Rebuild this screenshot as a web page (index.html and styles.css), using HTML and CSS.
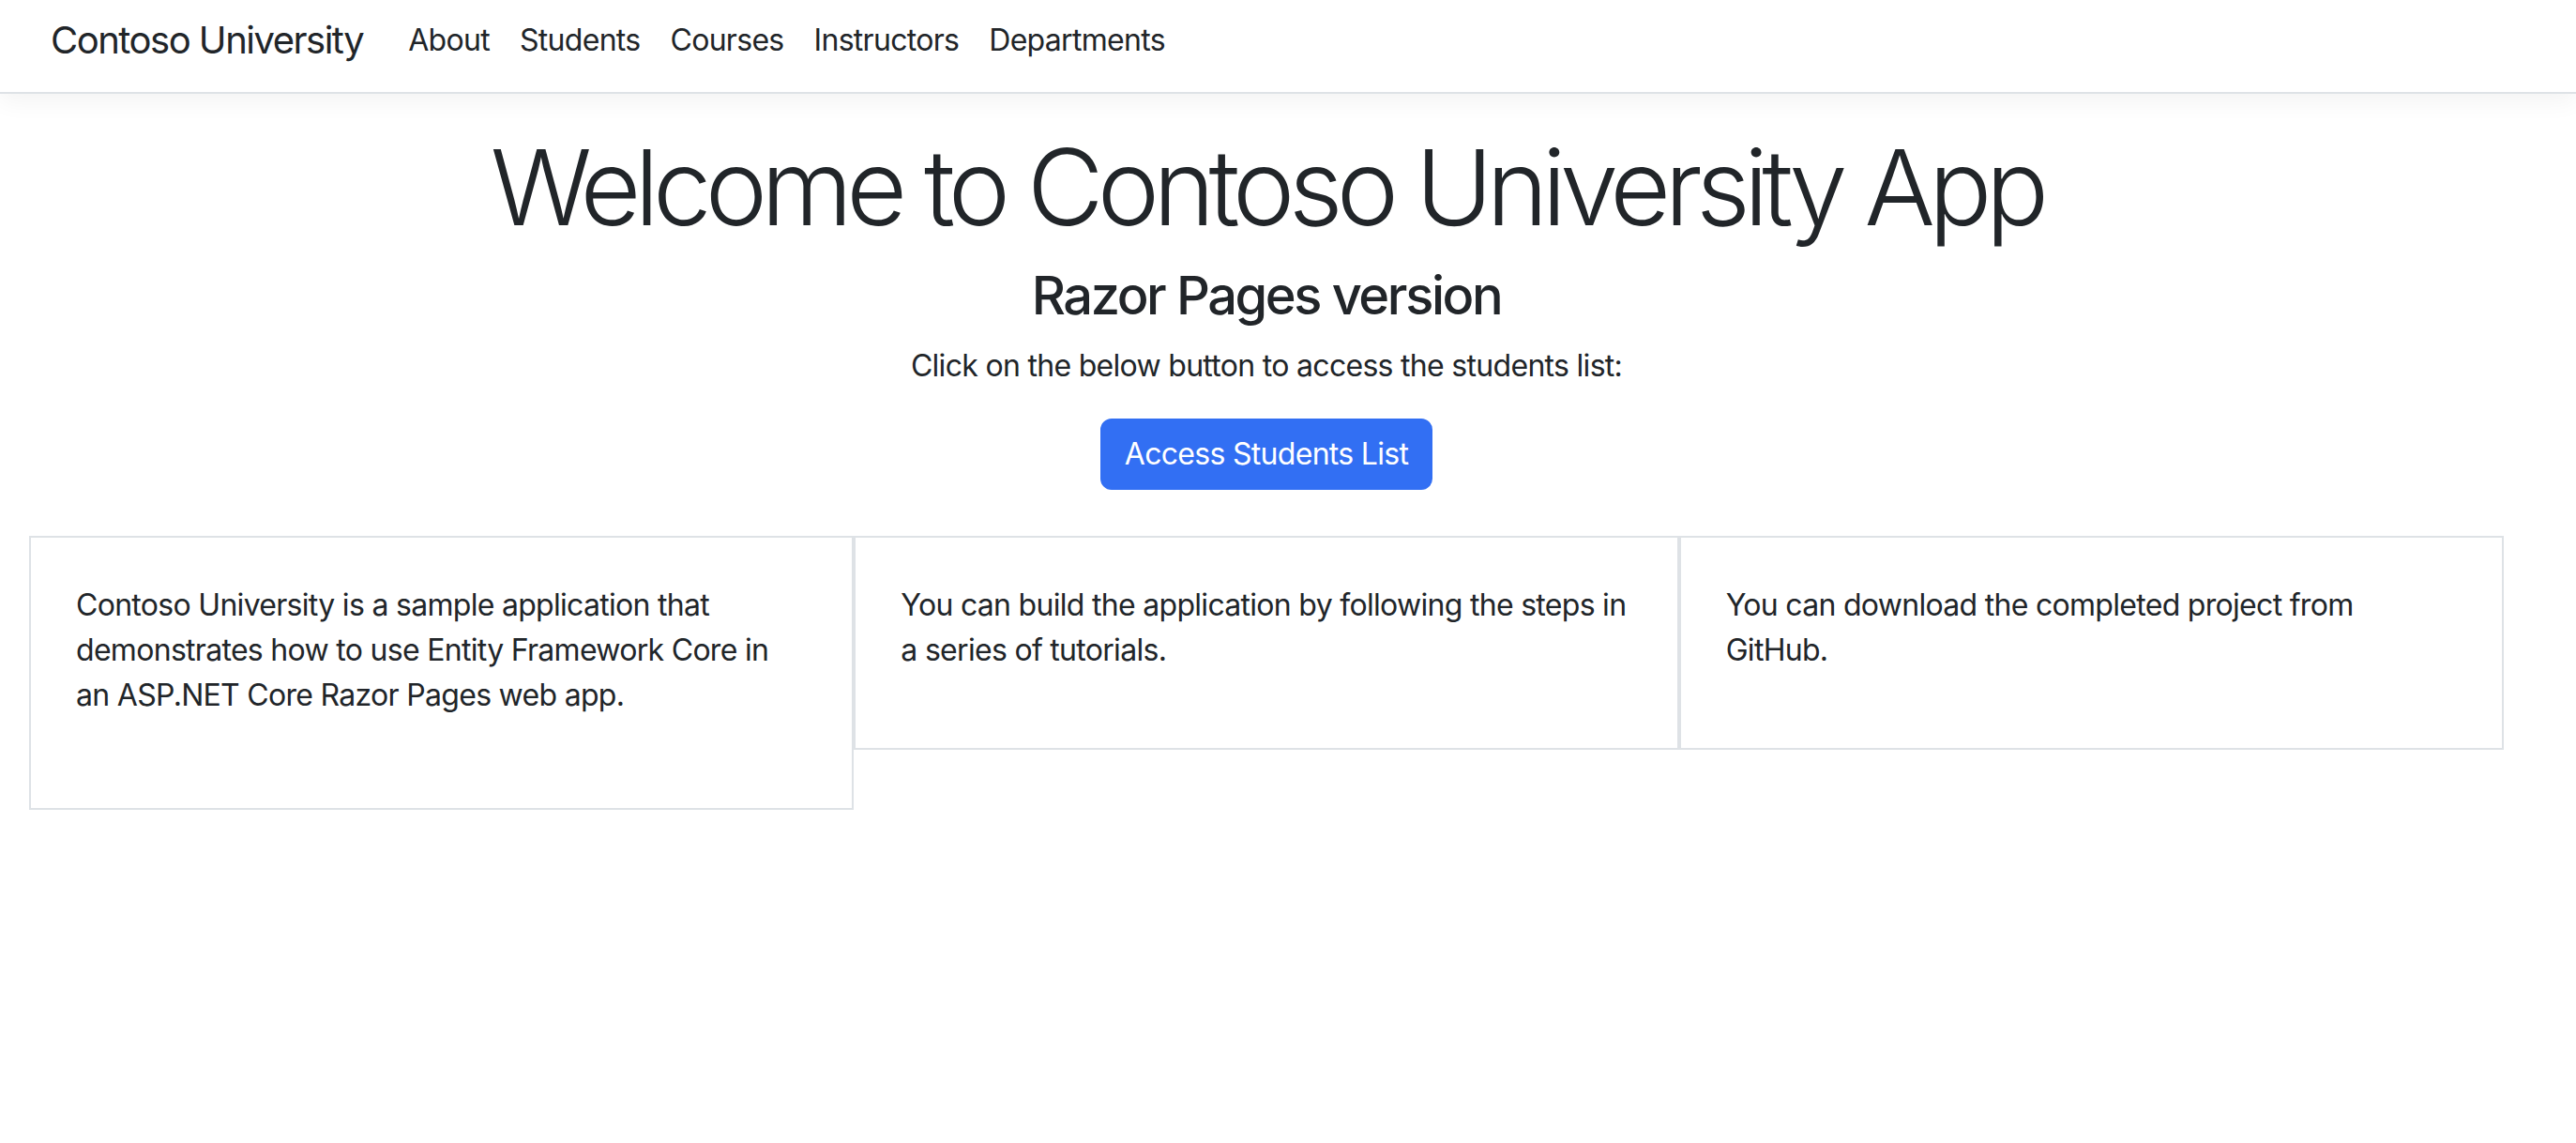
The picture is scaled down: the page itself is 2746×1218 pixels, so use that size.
FILE: index.html
```html
<!DOCTYPE html>
<html lang="en">
<head>
<meta charset="utf-8">
<title>Home page - Contoso University</title>
<link rel="stylesheet" href="styles.css">
</head>
<body>
<header>
  <nav class="navbar">
    <a class="brand" href="#">Contoso University</a>
    <ul class="nav">
      <li><a class="nav-link" href="#">About</a></li>
      <li><a class="nav-link" href="#">Students</a></li>
      <li><a class="nav-link" href="#">Courses</a></li>
      <li><a class="nav-link" href="#">Instructors</a></li>
      <li><a class="nav-link" href="#">Departments</a></li>
    </ul>
  </nav>
</header>
<main class="container">
  <section class="intro">
    <h1 class="display">Welcome to Contoso University App</h1>
    <h3 class="subtitle">Razor Pages version</h3>
    <p class="lead-text">Click on the below button to access the students list:</p>
    <p class="action"><a class="btn" href="#">Access Students List</a></p>
  </section>
  <div class="row">
    <div class="card card-tall">
      <p>Contoso University is a sample application that demonstrates how to use Entity Framework Core in an ASP.NET Core Razor Pages web app.</p>
    </div>
    <div class="card">
      <p>You can build the application by following the steps in a series of tutorials.</p>
    </div>
    <div class="card">
      <p>You can download the completed project from GitHub.</p>
    </div>
  </div>
</main>
</body>
</html>
```
FILE: styles.css
```css
* { box-sizing: border-box; }
html, body { margin: 0; padding: 0; background: #fff; }
body {
  font-family: Inter, "Noto Sans", "Liberation Sans", sans-serif;
  font-size: 32px;
  line-height: 1.5;
  letter-spacing: -0.7px;
  color: #212529;
}
a { text-decoration: none; color: inherit; }

.navbar {
  display: flex;
  align-items: center;
  height: 100px;
  padding: 0 0 12px 54px;
  border-bottom: 2px solid #dee2e6;
  box-shadow: 0 8px 24px rgba(0, 0, 0, 0.05);
  background: #fff;
}
.brand {
  font-size: 40px;
  line-height: 60px;
  letter-spacing: -1.5px;
  margin-right: 32px;
  color: #212529;
}
.nav {
  display: flex;
  list-style: none;
  margin: 0;
  padding: 0;
}
.nav-link {
  display: block;
  padding: 0 16px;
  font-size: 32px;
  line-height: 48px;
  color: #212529;
}

.container {
  margin: 32px 0 0 31px;
  width: 2638px;
}
.intro { text-align: center; margin-bottom: 49px; }
.display {
  font-size: 112px;
  font-weight: 300;
  line-height: 1.2;
  letter-spacing: -6.8px;
  margin: 0 0 16px;
}
.subtitle {
  font-size: 56px;
  font-weight: 500;
  line-height: 1.2;
  letter-spacing: -2.4px;
  margin: 0 0 16px;
}
.lead-text { margin: 0 0 32px; }
.action { margin: 0; line-height: 0; }
.btn {
  display: inline-block;
  padding: 12px 24px;
  border: 2px solid #326ff3;
  border-radius: 12px;
  background: #326ff3;
  color: #fff;
  font-size: 32px;
  line-height: 48px;
}

.row {
  display: flex;
  align-items: flex-start;
}
.card {
  flex: 1 1 0;
  border: 2px solid #dee2e6;
  padding: 48px;
}
.card p { margin: 0 0 32px; }
.card-tall { padding-bottom: 64px; }
```
